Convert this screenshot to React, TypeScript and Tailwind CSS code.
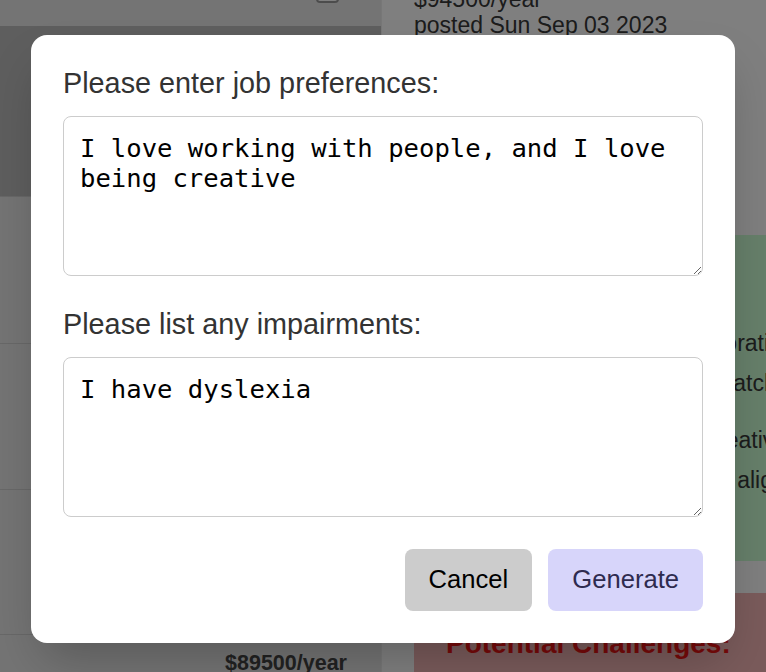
import React from 'react';

const SANS = { fontFamily: '"Liberation Sans", Arial, sans-serif' };
const MONO = { fontFamily: '"DejaVu Sans Mono", monospace' };

function JobRow({ selected, h }: { selected?: boolean; h: string }) {
  return <div className={`${h} shrink-0 border-b border-[#d0d0d0] ${selected ? 'bg-[#bcbcbc]' : ''}`} />;
}

export default function App() {
  return (
    <div className="relative h-[672px] w-full overflow-hidden flex" style={SANS}>
      {/* Job list */}
      <aside className="w-[382px] shrink-0 bg-[#e8e8e8] border-r border-[#eeeeee] flex flex-col">
        <div className="h-[26px] shrink-0 flex justify-end pr-[42px]">
          <div className="w-[23px] h-[23px] -mt-[20px] rounded-[4px] border-2 border-[#999] bg-white" />
        </div>
        <JobRow h="h-[171px]" selected />
        <JobRow h="h-[147px]" />
        <JobRow h="h-[146px]" />
        <JobRow h="h-[145px]" />
        <div className="shrink-0 pt-[15px] flex justify-end pr-[34px]">
          <p className="text-[21.5px] font-bold text-[#444] leading-tight">$89500/year</p>
        </div>
      </aside>

      {/* Job details */}
      <main className="w-[560px] shrink-0 bg-white pl-8 text-[#383838]">
        <div className="-mt-[14px] text-[23px] leading-[1.15]">
          <p>$94500/year</p>
          <p>posted Sun Sep 03 2023</p>
        </div>

        <section className="mt-[196px] h-[326px] bg-[#ccffd5] px-6 pt-6 whitespace-nowrap text-[23px]">
          <h2 className="font-bold text-[#0a6b1e] text-[26px]">Why It Fits:</h2>
          <div className="mt-[25px] leading-[40px]">
            <p>This job is very highly collaborative,</p>
            <p>and makes it a really great match</p>
          </div>
          <div className="mt-[17px] leading-[40px]">
            <p>Since you also want to be creative,</p>
            <p>the daily creative duties here align well</p>
          </div>
        </section>

        <section className="mt-8 h-[200px] bg-[#f4b6b6] px-8 pt-[35px]">
          <h2 className="font-bold text-[#ee1414] text-[28px] leading-[1.15]">Potential Challenges:</h2>
        </section>
      </main>

      {/* Modal */}
      <div className="absolute inset-0 bg-black/50 flex items-start justify-center pt-[35px]">
        <div className="w-[704px] bg-white rounded-2xl p-8 shadow-2xl">
          <label className="block text-[28.8px] text-[#333] mb-4 leading-[1.15]">
            Please enter job preferences:
          </label>
          <textarea
            className="block w-full h-[160px] border border-[#ccc] rounded-lg p-4 text-[25.6px] leading-[30px] text-black"
            style={MONO}
            defaultValue="I love working with people, and I love being creative"
          />
          <label className="block mt-8 text-[28.8px] text-[#333] mb-4 leading-[1.15]">
            Please list any impairments:
          </label>
          <textarea
            className="block w-full h-[160px] border border-[#ccc] rounded-lg p-4 text-[25.6px] leading-[30px] text-black"
            style={MONO}
            defaultValue="I have dyslexia"
          />
          <div className="mt-8 flex justify-end gap-4">
            <button className="bg-[#cccccc] text-black text-[25.6px] px-6 py-4 rounded-lg leading-[1.15]">
              Cancel
            </button>
            <button className="bg-[#d7d5fa] text-[#2e2b4f] text-[25.6px] px-6 py-4 rounded-lg leading-[1.15]">
              Generate
            </button>
          </div>
        </div>
      </div>
    </div>
  );
}
